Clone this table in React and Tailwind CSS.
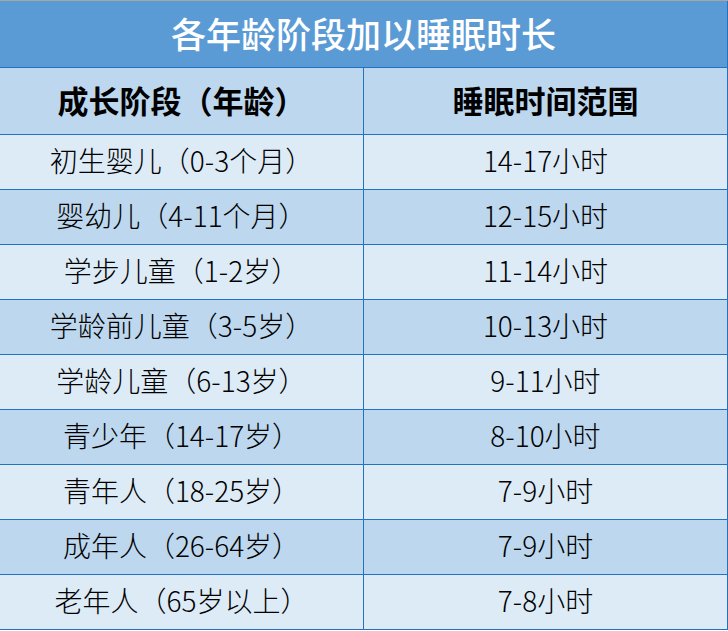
import React from 'react';

const rows = [
  ['初生婴儿（0-3个月）', '14-17小时'],
  ['婴幼儿（4-11个月）', '12-15小时'],
  ['学步儿童（1-2岁）', '11-14小时'],
  ['学龄前儿童（3-5岁）', '10-13小时'],
  ['学龄儿童（6-13岁）', '9-11小时'],
  ['青少年（14-17岁）', '8-10小时'],
  ['青年人（18-25岁）', '7-9小时'],
  ['成年人（26-64岁）', '7-9小时'],
  ['老年人（65岁以上）', '7-8小时'],
];

const font = "font-['Noto_Sans_CJK_SC',sans-serif]";

const App = () => {
  return (
    <div className={`w-[728px] h-[631px] bg-white ${font}`}>
      <div className="border-t border-[#a5a5a5]">
        {/* title */}
        <div className="h-[67px] pb-[3px] bg-[#5b9bd5] border-b border-r border-[#2172c0] flex items-center justify-center">
          <h1 className="text-[35px] font-medium text-white leading-none">各年龄阶段加以睡眠时长</h1>
        </div>

        <div className="grid grid-cols-[364px_364px]">
          <div className="h-[67px] pb-[4px] bg-[#bdd7ee] border-b border-r border-[#2172c0] flex items-center justify-center">
            <span className="text-[31px] font-bold text-black leading-none">成长阶段（年龄）</span>
          </div>
          <div className="h-[67px] pb-[4px] bg-[#bdd7ee] border-b border-r border-[#2172c0] flex items-center justify-center">
            <span className="text-[31px] font-bold text-black leading-none">睡眠时间范围</span>
          </div>

          {rows.map(([stage, hours], i) => {
            const bg = i % 2 === 0 ? 'bg-[#ddebf7]' : 'bg-[#bdd7ee]';
            return (
              <React.Fragment key={stage}>
                <div className={`h-[55px] pb-[4px] ${bg} border-b border-r border-[#2172c0] flex items-center justify-center`}>
                  <span className="text-[28px] font-light text-black leading-none">{stage}</span>
                </div>
                <div className={`h-[55px] pb-[4px] ${bg} border-b border-r border-[#2172c0] flex items-center justify-center`}>
                  <span className="text-[28px] font-light text-black leading-none">{hours}</span>
                </div>
              </React.Fragment>
            );
          })}
        </div>
      </div>
    </div>
  );
};

export default App;
